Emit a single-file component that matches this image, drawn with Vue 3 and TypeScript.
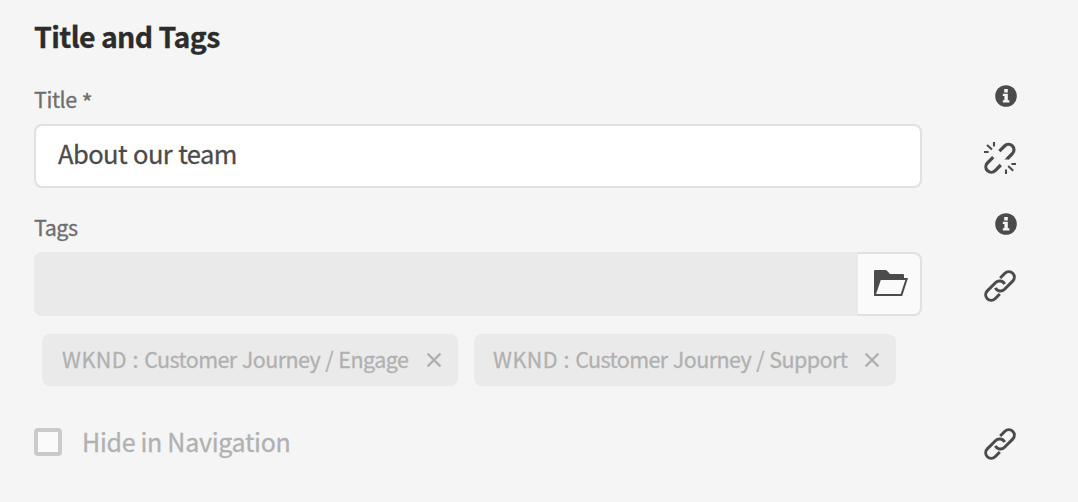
<script setup lang="ts">
import { ref } from 'vue'

interface Tag {
  id: string
  namespace: string
  path: string
}

const title = ref('About our team')
const tags: Tag[] = [
  { id: 'engage', namespace: 'WKND :', path: ' Customer Journey / Engage' },
  { id: 'support', namespace: 'WKND :', path: ' Customer Journey / Support' },
]
</script>

<template>
  <main class="panel">
    <div class="form">
      <h2 class="heading">Title and Tags</h2>

      <label class="label">Title <span class="star">*</span></label>
      <div class="field">{{ title }}</div>

      <label class="label tags-label">Tags</label>
      <div class="picker">
        <div class="picker-input"></div>
        <button class="picker-button" type="button" aria-label="Browse tags">
          <svg width="34" height="26" viewBox="0 0 34 26">
            <path
              fill="#4b4b4b"
              fill-rule="evenodd"
              d="M0 1.2Q0 0 1.2 0H11.4Q12.2 0 12.8.6L16 4H29Q30 4 30 5V8H34L28.2 26H0ZM6.8 10L2.1 24H26.7L31.3 10Z"
            />
          </svg>
        </button>
      </div>

      <div class="tags">
        <div v-for="tag in tags" :key="tag.id" class="tag" :class="tag.id">
          <span class="tag-text"><span class="namespace">{{ tag.namespace }}</span>{{ tag.path }}</span>
          <svg class="cross" width="16" height="16" viewBox="0 0 16 16">
            <path d="M1.6 1.6L14.4 14.4M14.4 1.6L1.6 14.4" stroke="#b1b1b1" stroke-width="2.4" />
          </svg>
        </div>
      </div>

      <div class="check">
        <span class="box"></span>
        <span class="check-text">Hide in Navigation</span>
      </div>
    </div>

    <aside class="actions">
      <template v-for="n in 2" :key="n">
        <svg class="info" width="22" height="22" viewBox="0 0 22 22">
          <circle cx="11" cy="11" r="10.8" fill="#4b4b4b" />
          <path
            fill="#f5f5f5"
            d="M9.2 4H12.8V7.4H9.2ZM7.8 8.8H12.8V15.2H14.4V17.4H7.8V15.2H9.4V11H7.8Z"
          />
        </svg>
        <svg v-if="n === 1" class="unlink" width="32" height="32" viewBox="0 0 32 32">
          <g fill="none" stroke="#4b4b4b" stroke-width="3.2">
            <path d="M15.4 9.2L20.6 4A5.4 5.4 0 0 1 28.4 11.7L23.5 16.6" />
            <path d="M9.2 15.2L3.4 21A5.4 5.4 0 0 0 11.2 28.6L16.8 23" />
            <path
              stroke-width="2.1"
              d="M10 0V4.4M3 3L8 7.6M0 10H4.6M27.4 22H32M24.2 24L29.2 28.7M22 27.6V32"
            />
            <path fill="#4b4b4b" stroke="none" d="M20.5 17.4L27 11L28.8 13L24.3 17.6Z" />
          </g>
        </svg>
        <svg v-else class="link" width="32" height="32" viewBox="0 0 32 32">
          <g fill="none" stroke="#4b4b4b" stroke-width="3">
            <path d="M16.2 8L20.9 3.3A5.5 5.5 0 0 1 28.7 11.1L20.3 19.5A5.5 5.5 0 0 1 11.4 17.8" />
            <path d="M15.8 24L11.1 28.7A5.5 5.5 0 0 1 3.3 20.9L11.7 12.5A5.5 5.5 0 0 1 20.6 14.2" />
          </g>
        </svg>
      </template>
      <svg class="link last" width="32" height="32" viewBox="0 0 32 32">
        <g fill="none" stroke="#4b4b4b" stroke-width="3">
          <path d="M16.2 8L20.9 3.3A5.5 5.5 0 0 1 28.7 11.1L20.3 19.5A5.5 5.5 0 0 1 11.4 17.8" />
          <path d="M15.8 24L11.1 28.7A5.5 5.5 0 0 1 3.3 20.9L11.7 12.5A5.5 5.5 0 0 1 20.6 14.2" />
        </g>
      </svg>
    </aside>
  </main>
</template>

<style>
body {
  background: #f5f5f5;
}
</style>

<style scoped>
.panel {
  box-sizing: border-box;
  width: 1078px;
  height: 502px;
  padding: 0 61px 0 34px;
  display: flex;
  justify-content: space-between;
  overflow: hidden;
  background: #f5f5f5;
  font-family: 'Noto Sans CJK SC', 'Noto Sans', sans-serif;
  white-space: nowrap;
  -webkit-text-stroke: 0.3px currentColor;
}
.form {
  width: 888px;
}
.heading {
  margin: 16px 0 0;
  height: 42px;
  font-size: 28.5px;
  line-height: 40px;
  font-weight: 700;
  letter-spacing: -0.6px;
  color: #2c2c2c;
}
.label {
  display: block;
  margin-top: 26px;
  height: 32px;
  font-size: 21.5px;
  line-height: 30px;
  letter-spacing: -0.45px;
  color: #6e6e6e;
}
.star {
  font-size: 24px;
  line-height: 20px;
  margin-left: 0.5px;
  vertical-align: -4px;
}
.field {
  box-sizing: border-box;
  height: 64px;
  margin-top: 8px;
  padding-left: 22px;
  border: 2px solid #e1e1e1;
  border-radius: 8px;
  background: #fff;
  font-size: 25.5px;
  line-height: 54px;
  letter-spacing: -0.55px;
  word-spacing: 0.8px;
  color: #4b4b4b;
}
.tags-label {
  margin-top: 24px;
}
.picker {
  display: flex;
  height: 64px;
  margin-top: 8px;
}
.picker-input {
  flex: 1;
  border-radius: 8px 0 0 8px;
  background: #eaeaea;
}
.picker-button {
  box-sizing: border-box;
  width: 64px;
  padding: 0 0 2px 3px;
  display: flex;
  align-items: center;
  justify-content: center;
  border: 2px solid #e1e1e1;
  border-left: 0;
  border-radius: 0 8px 8px 0;
  background: #fafafa;
}
.tags {
  display: flex;
  gap: 16px;
  margin: 18px 0 0 8px;
}
.tag {
  box-sizing: border-box;
  width: 416px;
  height: 52px;
  padding: 0 16px 0 20px;
  display: flex;
  align-items: center;
  justify-content: space-between;
  border-radius: 8px;
  background: #eaeaea;
  font-size: 21.5px;
  line-height: 50px;
  letter-spacing: -0.58px;
  word-spacing: 1px;
  color: #b1b1b1;
}
.tag-text {
  height: 52px;
}
.namespace {
  letter-spacing: 0.5px;
  word-spacing: 0;
}
.tag.support {
  width: 422px;
  padding-left: 19px;
}
.check {
  display: flex;
  align-items: center;
  height: 36px;
  margin-top: 38px;
}
.box {
  box-sizing: border-box;
  width: 28px;
  height: 28px;
  margin-right: 20px;
  border: 4px solid #cacaca;
  border-radius: 4px;
  background: #fafafa;
}
.check-text {
  height: 36px;
  font-size: 25px;
  line-height: 34px;
  letter-spacing: -0.3px;
  color: #b1b1b1;
}
.actions {
  width: 33px;
  padding-top: 85px;
  display: flex;
  flex-direction: column;
}
.actions svg {
  flex: none;
}
.info {
  margin-left: 11px;
}
.unlink {
  margin: 35px 0 39px;
}
.link {
  margin-top: 35px;
}
.link.last {
  margin-top: 126px;
}
</style>
